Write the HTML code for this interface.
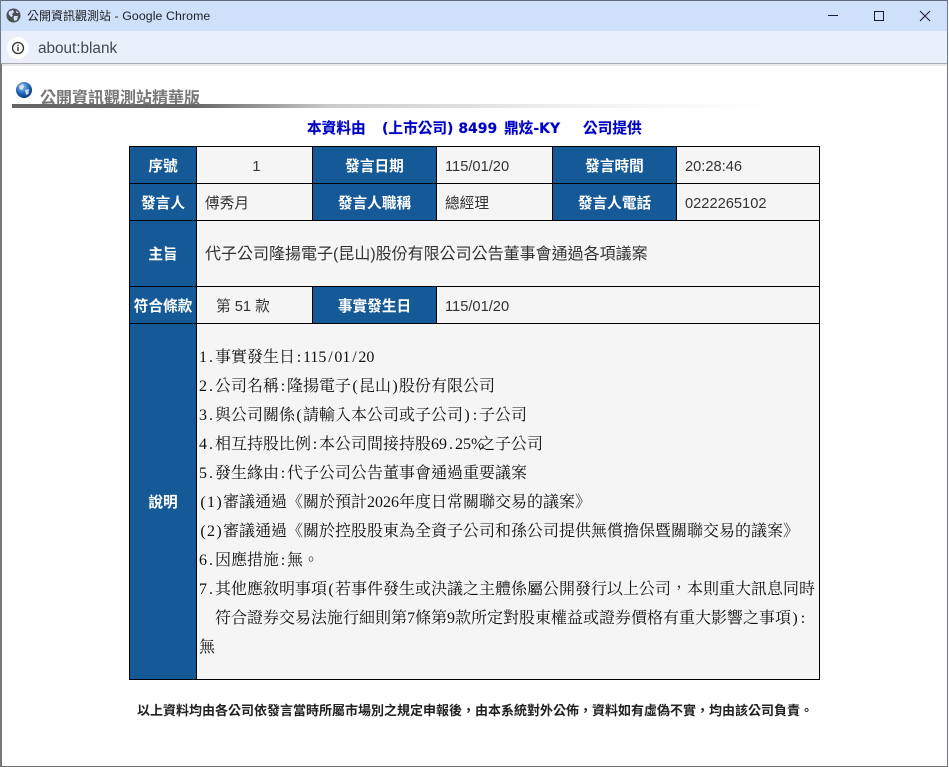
<!DOCTYPE html>
<html lang="zh-Hant"><head><meta charset="utf-8"><title>公開資訊觀測站</title>
<style>
html,body{margin:0;padding:0;background:#fff}
body{width:949px;height:767px;position:relative;overflow:hidden;font-family:"Liberation Sans","Noto Sans CJK TC",sans-serif}
.a{position:absolute;white-space:pre}
.c{position:absolute;box-sizing:border-box;display:flex;align-items:center;white-space:pre;font-size:14.67px;color:#333;background:#f5f5f5}
.h{background:#155a96;color:#fff;justify-content:center;font-weight:bold;font-size:14.67px}
.v{padding-left:8px}
.n{padding-top:3px}
.m{position:absolute;left:199px;font-family:"Liberation Serif","Noto Serif CJK TC",serif;font-size:16px;line-height:29px;height:29px;color:#111;white-space:pre}
.m i{display:inline-block;width:8px;text-align:center;font-style:normal}
.t{position:absolute;top:120px;font-size:14.67px;line-height:18px;font-weight:bold;color:#0000c4;white-space:pre;text-shadow:0 0 1px rgba(0,0,200,.45)}
.d{font-family:"DejaVu Sans","Noto Sans CJK TC",sans-serif;font-size:14px}
</style></head><body>
<div class="a" style="left:0;top:0;width:949px;height:31px;background:#cfe0fb"></div>
<div class="a" style="left:0;top:0;width:949px;height:1px;background:#5f6b7c"></div>
<div class="a" style="left:0;top:31px;width:949px;height:32px;background:#e9effb"></div>
<div class="a" style="left:0;top:63px;width:949px;height:1px;background:#a9adb3"></div>
<div class="a" style="left:0;top:64px;width:949px;height:2px;background:#e8e9ea"></div>
<div class="a" style="left:0;top:64px;width:2px;height:703px;background:#777"></div>
<div class="a" style="left:0;top:0;width:1px;height:64px;background:#6f7a88"></div>
<div class="a" style="left:947px;top:0;width:1px;height:767px;background:#6f7a88"></div>
<div class="a" style="left:948px;top:0;width:1px;height:767px;background:#fff"></div>
<div class="a" style="left:0;top:766px;width:948px;height:1px;background:#6a6a6a"></div>

<svg class="a" style="left:6px;top:8px" width="15" height="15" viewBox="0 0 15 15"><circle cx="7.5" cy="7.5" r="7" fill="#4a5058"/><path d="M3 3.5 L7 2 L8 4 L6 6 L7 8 L5 9 L2.5 6Z M8 8 L12 8 L11 12 L8.5 13 L7.5 10Z M10 2.5 L13 5 L10.5 5Z" fill="#d5e1f5"/></svg>
<div class="a" style="left:27px;top:8px;font-size:12px;line-height:16px;color:#202124">公開資訊觀測站<span style="font-size:12.3px;letter-spacing:.1px"> - Google Chrome</span></div>
<div class="a" style="left:7px;top:37px;width:22px;height:22px;border-radius:11px;background:#fff"></div>
<svg class="a" style="left:11px;top:41px" width="14" height="14" viewBox="0 0 14 14"><circle cx="7" cy="7" r="5.5" fill="none" stroke="#333" stroke-width="1.3"/><rect x="6.3" y="6" width="1.4" height="4" fill="#333"/><rect x="6.3" y="3.8" width="1.4" height="1.4" fill="#333"/></svg>
<div class="a" style="left:38px;top:40px;font-size:15.3px;line-height:18px;color:#45484d">about:blank</div>
<svg class="a" style="left:820px;top:5px" width="120" height="22" viewBox="0 0 120 22" fill="none" stroke="#1a1a2a" stroke-width="1"><path d="M8 10.5H18"/><rect x="54.5" y="6.5" width="9" height="9"/><path d="M100 6 L110 16 M110 6 L100 16"/></svg>

<svg class="a" style="left:15px;top:81px" width="19" height="19" viewBox="0 0 19 19"><defs><radialGradient id="g" cx="40%" cy="30%" r="70%"><stop offset="0" stop-color="#9cc8f2"/><stop offset=".6" stop-color="#1f66b8"/><stop offset="1" stop-color="#0b3b7e"/></radialGradient></defs><circle cx="9" cy="9" r="8" fill="url(#g)"/><path d="M4 5 L8 3 L9 6 L7 9 L4.5 8Z M10 9 L14 8 L13.5 13 L11 14Z" fill="#e4eef6" opacity=".85"/></svg>
<div class="a" style="left:12px;top:104px;width:760px;height:4px;background:linear-gradient(90deg,#666 0,#666 24%,#ccc 42%,#f2f2f2 75%,#fff 100%)"></div>
<div class="a" style="left:40px;top:89px;font-size:16px;line-height:20px;font-weight:bold;color:#777">公開資訊觀測站精華版</div>

<div class="t" style="left:307px">本資料由</div>
<div class="t" style="left:382px"><span class="d">(</span>上市公司<span class="d">) 8499</span></div>
<div class="t" style="left:504px">鼎炫<span class="d">-KY</span></div>
<div class="t" style="left:583px">公司提供</div>

<div class="a" style="left:129px;top:146px;width:691px;height:534px;background:#000"></div>

<div class="c h" style="left:130px;top:147px;width:66px;height:36px">序號</div>
<div class="c n" style="left:197px;top:147px;width:115px;height:36px;justify-content:center;padding-left:4px">1</div>
<div class="c h" style="left:313px;top:147px;width:123px;height:36px">發言日期</div>
<div class="c v n" style="left:437px;top:147px;width:115px;height:36px">115/01/20</div>
<div class="c h" style="left:553px;top:147px;width:123px;height:36px">發言時間</div>
<div class="c v n" style="left:677px;top:147px;width:142px;height:36px">20:28:46</div>

<div class="c h" style="left:130px;top:184px;width:66px;height:36px">發言人</div>
<div class="c v" style="left:197px;top:184px;width:115px;height:36px">傅秀月</div>
<div class="c h" style="left:313px;top:184px;width:123px;height:36px">發言人職稱</div>
<div class="c v" style="left:437px;top:184px;width:115px;height:36px">總經理</div>
<div class="c h" style="left:553px;top:184px;width:123px;height:36px">發言人電話</div>
<div class="c v n" style="left:677px;top:184px;width:142px;height:36px">0222265102</div>

<div class="c h" style="left:130px;top:221px;width:66px;height:65px">主旨</div>
<div class="c v" style="left:197px;top:221px;width:622px;height:65px;font-size:16px;padding-bottom:3px">代子公司隆揚電子(昆山)股份有限公司公告董事會通過各項議案</div>

<div class="c h" style="left:130px;top:287px;width:66px;height:36px">符合條款</div>
<div class="c" style="left:197px;top:287px;width:115px;height:36px;padding-left:19px">第 51 款</div>
<div class="c h" style="left:313px;top:287px;width:123px;height:36px">事實發生日</div>
<div class="c v n" style="left:437px;top:287px;width:382px;height:36px">115/01/20</div>

<div class="c h" style="left:130px;top:324px;width:66px;height:355px">說明</div>
<div class="c" style="left:197px;top:324px;width:622px;height:355px"></div>

<div class="m" style="top:343px">1<i>.</i>事實發生日<i>:</i>115<i>/</i>01<i>/</i>20</div>
<div class="m" style="top:372px">2<i>.</i>公司名稱<i>:</i>隆揚電子<i>(</i>昆山<i>)</i>股份有限公司</div>
<div class="m" style="top:401px">3<i>.</i>與公司關係<i>(</i>請輸入本公司或子公司<i>)</i><i>:</i>子公司</div>
<div class="m" style="top:430px">4<i>.</i>相互持股比例<i>:</i>本公司間接持股69<i>.</i>25<i>%</i>之子公司</div>
<div class="m" style="top:459px">5<i>.</i>發生緣由<i>:</i>代子公司公告董事會通過重要議案</div>
<div class="m" style="top:488px"><i>(</i>1<i>)</i>審議通過《關於預計2026年度日常關聯交易的議案》</div>
<div class="m" style="top:517px"><i>(</i>2<i>)</i>審議通過《關於控股股東為全資子公司和孫公司提供無償擔保暨關聯交易的議案》</div>
<div class="m" style="top:546px">6<i>.</i>因應措施<i>:</i>無。</div>
<div class="m" style="top:575px">7<i>.</i>其他應敘明事項<i>(</i>若事件發生或決議之主體係屬公開發行以上公司&#65292;本則重大訊息同時</div>
<div class="m" style="top:604px"><i> </i><i> </i>符合證券交易法施行細則第7條第9款所定對股東權益或證券價格有重大影響之事項<i>)</i><i>:</i></div>
<div class="m" style="top:633px">無</div>

<div class="a" style="left:137px;top:703px;font-size:13px;line-height:16px;font-weight:bold;color:#222">以上資料均由各公司依發言當時所屬市場別之規定申報後&#65292;由本系統對外公佈&#65292;資料如有虛偽不實&#65292;均由該公司負責。</div>
</body></html>
